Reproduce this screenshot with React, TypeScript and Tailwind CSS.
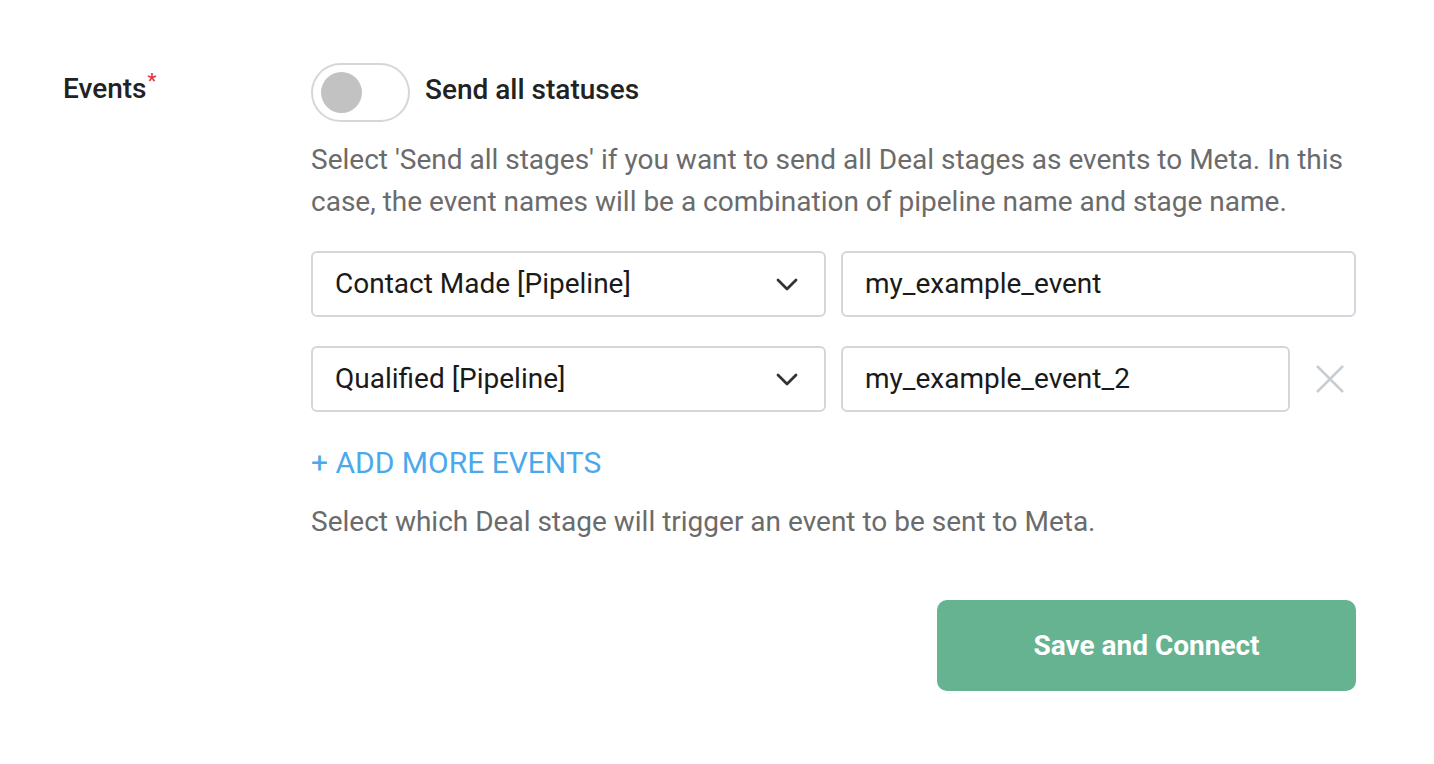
const font = { fontFamily: 'Roboto, "Liberation Sans", sans-serif' }

function Chevron() {
  return (
    <svg width="22" height="13" viewBox="0 0 22 13" fill="none" className="text-[#333]">
      <path d="M2 2l9 9 9-9" stroke="currentColor" strokeWidth="2.8" strokeLinecap="round" strokeLinejoin="round" />
    </svg>
  )
}

function SelectBox({ value }: { value: string }) {
  return (
    <div className="flex h-[66px] w-[515px] shrink-0 items-center justify-between rounded-[6px] border-2 border-[#d3d7dc] pl-[22px] pr-[26px] text-[28px] text-[#1a1a1a]">
      <span>{value}</span>
      <Chevron />
    </div>
  )
}

function TextBox({ value, width }: { value: string; width: string }) {
  return (
    <div className={`flex h-[66px] items-center rounded-[6px] border-2 border-[#d3d7dc] pl-[22px] text-[28px] text-[#1a1a1a] ${width}`}>
      {value}
    </div>
  )
}

export default function App() {
  return (
    <div className="min-h-screen bg-white" style={font}>
      <div className="flex pl-[63px] pt-[63px]">
        <div className="w-[248px] shrink-0 pt-[5px] text-[28px] font-medium text-[#222]">
          Events<span className="relative -top-[10px] ml-[1px] text-[20px] text-[#e0383e]">*</span>
        </div>

        <div className="w-[1045px]">
          <div className="flex items-center gap-[15px]">
            <div className="flex h-[59px] w-[99px] items-center rounded-full border-2 border-[#d3d7dc] bg-white pl-[8px]">
              <div className="h-[41px] w-[41px] rounded-full bg-[#c2c2c2]" />
            </div>
            <span className="mb-[6px] text-[28px] font-medium text-[#222]">Send all statuses</span>
          </div>

          <p className="mt-[17px] text-[28px] leading-[42px] text-[#6b6b6b]">
            Select 'Send all stages' if you want to send all Deal stages as events to Meta. In this case, the event names will be a combination of pipeline name and stage name.
          </p>

          <div className="mt-[28px] flex flex-col gap-[29px]">
            <div className="flex gap-[15px]">
              <SelectBox value="Contact Made [Pipeline]" />
              <TextBox value="my_example_event" width="w-[515px]" />
            </div>
            <div className="flex items-center gap-[15px]">
              <SelectBox value="Qualified [Pipeline]" />
              <TextBox value="my_example_event_2" width="w-[449px]" />
              <button type="button" className="ml-[11px] text-[#c8cdd2]">
                <svg width="28" height="28" viewBox="0 0 28 28" fill="none">
                  <path d="M1 1l26 26M27 1L1 27" stroke="currentColor" strokeWidth="2.5" />
                </svg>
              </button>
            </div>
          </div>

          <button type="button" className="mt-[33px] block text-[30px] leading-[36px] text-[#4aa8ec]">
            + ADD MORE EVENTS
          </button>

          <p className="mt-[20px] text-[28px] leading-[42px] text-[#6b6b6b]">
            Select which Deal stage will trigger an event to be sent to Meta.
          </p>

          <div className="mt-[57px] flex justify-end">
            <button
              type="button"
              className="h-[91px] w-[419px] rounded-[10px] bg-[#65b390] text-[28px] font-bold text-white"
            >
              Save and Connect
            </button>
          </div>
        </div>
      </div>
    </div>
  )
}
